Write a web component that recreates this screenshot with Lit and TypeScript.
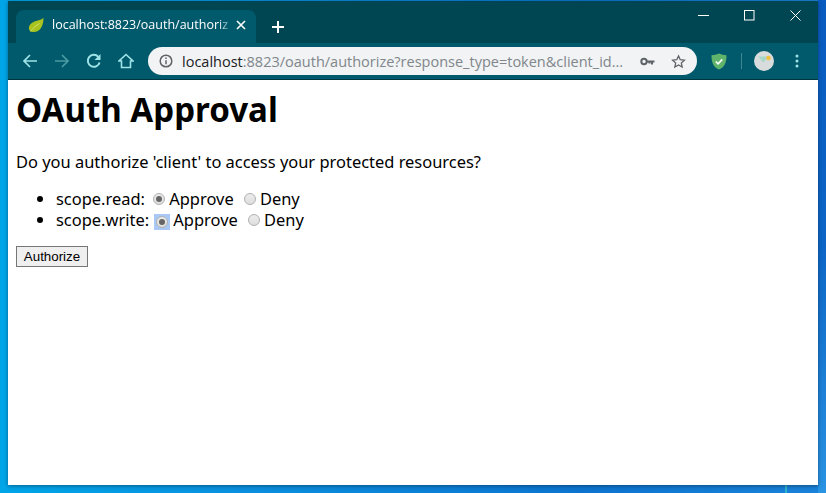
import { LitElement, html, css } from "lit";
import { customElement } from "lit/decorators.js";

@customElement("app-root")
export class AppRoot extends LitElement {
  static styles = css`
    :host {
      display: block;
      width: 826px;
      height: 493px;
      overflow: hidden;
      background:
        linear-gradient(#2fb4cf, #2fb4cf) 785px 100% / 2px 8px no-repeat,
        linear-gradient(180deg, #0a5bbf 0%, #0d66c6 50%, #2a93e2 100%) right / 8px 100% no-repeat,
        linear-gradient(90deg, #00a5e8 0%, #0a8fde 30%, #0c74cf 70%, #1a82d8 100%);
    }
    .window {
      margin: 1px 8px 0;
      height: 484px;
      display: flex;
      flex-direction: column;
      background: #fff;
      box-shadow: 0 1px 4px rgba(0, 0, 0, 0.4);
    }
    .titlebar {
      height: 42px;
      flex: none;
      background: #004652;
      display: flex;
      align-items: flex-end;
      box-sizing: border-box;
      padding-left: 8px;
    }
    .tab {
      width: 240px;
      height: 33px;
      box-sizing: border-box;
      background: #005a6b;
      border-radius: 8px 8px 0 0;
      display: flex;
      align-items: center;
      padding: 0 10px 4px 12px;
      color: #fff;
      font: 12.5px "Open Sans", sans-serif;
    }
    .tab-title {
      flex: 1;
      margin-left: 8px;
      white-space: nowrap;
      -webkit-mask-image: linear-gradient(90deg, #000 90%, transparent 100%);
      mask-image: linear-gradient(90deg, #000 90%, transparent 100%);
    }
    .newtab {
      margin: 0 0 8px 14px;
      width: 16px;
      height: 16px;
      display: block;
    }
    .spacer { flex: 1; }
    .winbtns {
      align-self: flex-start;
      display: flex;
      height: 30px;
    }
    .winbtn {
      width: 46px;
      height: 28px;
      display: flex;
      align-items: center;
      justify-content: center;
    }
    .toolbar {
      height: 36px;
      flex: none;
      background: #005a6b;
      border-bottom: 1px solid #00363f;
      display: flex;
      align-items: center;
      padding-left: 6px;
    }
    .nav {
      width: 32px;
      display: flex;
      justify-content: center;
      flex: none;
    }
    .omnibox {
      width: 549px;
      height: 28px;
      margin-left: 6px;
      background: #f1f3f4;
      border-radius: 14px;
      display: flex;
      align-items: center;
      box-sizing: border-box;
      padding: 0 11px 0 11px;
      font: 14.5px "Open Sans", sans-serif;
      color: #80868b;
      flex: none;
    }
    .url {
      flex: 1;
      margin-left: 9px;
      white-space: nowrap;
    }
    .host { color: #202124; }
    .omni-icon { margin-left: 16px; display: block; flex: none; }
    .ext { display: flex; align-items: center; margin-left: 14px; }
    .divider { width: 1px; height: 16px; background: #3f8693; margin: 0 12px 0 14px; }
    .avatar {
      width: 20px;
      height: 20px;
      display: block;
    }
    .menu { margin-left: 21px; display: block; }
    .page {
      flex: 1;
      color: #000;
      padding: 8px;
      font: 16.45px/21px "Noto Sans", "Open Sans", sans-serif;
    }
    h1 {
      margin: 0;
      font: 700 33.1px/44px "Noto Sans", "Open Sans", sans-serif;
    }
    p { margin: 19px 0 16px; }
    ul { margin: 0 0 16px; padding-left: 40px; }
    .radio {
      display: inline-block;
      width: 12px;
      height: 12px;
      box-sizing: border-box;
      border-radius: 50%;
      border: 1px solid #b0b0b0;
      background: linear-gradient(#ececec, #dedede);
      position: relative;
    }
    .radio.on::after {
      content: "";
      position: absolute;
      left: 2px;
      top: 2px;
      width: 6px;
      height: 6px;
      border-radius: 50%;
      background: #666;
    }
    .slot { margin: 0 4px 0 4px; }
    .ring {
      display: inline-block;
      padding: 2px;
      margin: 0 3px 0 1px;
      line-height: 0;
      background: #a9c8f5;
      vertical-align: -2px;
    }
    .gap { margin-left: 6px; }
    button {
      display: block;
      font: 13.33px "Liberation Sans", Arial, sans-serif;
      height: 21px;
      width: 72px;
      padding: 0;
      margin: 0;
      color: #000;
      background: #efefef;
      border: 1px solid #767676;
      box-sizing: border-box;
    }
  `;

  render() {
    return html`
      <div class="window">
        <div class="titlebar">
          <div class="tab">
            <svg width="16" height="16" viewBox="0 0 16 16">
              <path d="M15.500 .500C14 3.300 10 3 6.500 4.500 2.500 6 .5 9 1 12c.3 2 2 3 4 3 5 .5 10.500-3 10.500-14.500z" fill="#a9c41f"/>
              <path d="M2.500 14.500C5 11 8 8.500 11.500 6.500" stroke="#d4e06a" stroke-width="1" fill="none"/>
            </svg>
            <span class="tab-title">localhost:8823/oauth/authoriz</span>
            <svg width="10" height="10" viewBox="0 0 10 10">
              <path d="M1 1l8 8M9 1l-8 8" stroke="#fff" stroke-width="1.600" fill="none"/>
            </svg>
          </div>
          <svg class="newtab" viewBox="0 0 16 16">
            <path d="M8 2v12M2 8h12" stroke="#fff" stroke-width="2" fill="none"/>
          </svg>
          <div class="spacer"></div>
          <div class="winbtns">
            <div class="winbtn"><svg width="11" height="11" viewBox="0 0 11 11"><path d="M0 5.500h11" stroke="#fff" fill="none"/></svg></div>
            <div class="winbtn"><svg width="11" height="11" viewBox="0 0 11 11"><rect x=".5" y=".5" width="9.500" height="9.500" stroke="#fff" fill="none"/></svg></div>
            <div class="winbtn"><svg width="11" height="11" viewBox="0 0 11 11"><path d="M.5.500l10 10M10.500.500l-10 10" stroke="#fff" fill="none"/></svg></div>
          </div>
        </div>
        <div class="toolbar">
          <div class="nav"><svg width="16" height="16" viewBox="0 0 16 16"><path d="M15 8H2M8 2L2 8l6 6" stroke="#9ee3e8" stroke-width="1.700" fill="none"/></svg></div>
          <div class="nav"><svg width="16" height="16" viewBox="0 0 16 16"><path d="M1 8h13M8 2l6 6-6 6" stroke="#4a9ba3" stroke-width="1.700" fill="none"/></svg></div>
          <div class="nav"><svg width="16" height="16" viewBox="0 0 16 16"><path d="M13.600 9.500A6 6 0 1 1 12.300 3.800" stroke="#9ee3e8" stroke-width="2" fill="none"/><path d="M14.500 1v6h-6z" fill="#9ee3e8"/></svg></div>
          <div class="nav"><svg width="16" height="16" viewBox="0 0 16 16"><path d="M8 1.500L1 8h2.500v6.500h9V8H15z" stroke="#9ee3e8" stroke-width="1.600" fill="none"/></svg></div>
          <div class="omnibox">
            <svg width="14" height="14" viewBox="0 0 14 14"><circle cx="7" cy="7" r="5.800" stroke="#5f6368" stroke-width="1.500" fill="none"/><path d="M7 6.200v4M7 3.500v1.500" stroke="#5f6368" stroke-width="1.500"/></svg>
            <span class="url"><span class="host">localhost</span>:8823/oauth/authorize?response_type=token&amp;client_id...</span>
            <svg class="omni-icon" width="15" height="15" viewBox="0 0 15 15"><circle cx="4" cy="7.500" r="2.700" stroke="#5f6368" stroke-width="2" fill="none"/><path d="M6.500 7.500h8M12 7.500v3M9.500 7.500v2" stroke="#5f6368" stroke-width="2" fill="none"/></svg>
            <svg class="omni-icon" width="15" height="15" viewBox="0 0 24 24"><path d="M12 3l2.800 6.100 6.700.8-5 4.500 1.400 6.600L12 17.600 6.100 21l1.400-6.600-5-4.500 6.700-.8z" stroke="#5f6368" stroke-width="2" fill="none"/></svg>
          </div>
          <div class="ext">
            <svg width="16" height="17" viewBox="0 0 16 17"><path d="M8 .500C5.500 1.500 3 2 .500 2.200.500 9 2 14 8 16.500 14 14 15.500 9 15.500 2.200 13 2 10.500 1.500 8 .500z" fill="#5fb36a"/><path d="M4.800 8.500l2.300 2.300 4.200-4.400" stroke="#fff" stroke-width="1.600" fill="none"/></svg>
            <div class="divider"></div>
            <svg class="avatar" viewBox="0 0 20 20"><circle cx="10" cy="10" r="10" fill="#d9dcdc"/><path d="M4 5.500h10l-4.500 6v4.500h3H6.500h3v-4.500z" fill="#a5d8c8"/><circle cx="14.500" cy="7" r="2.300" fill="#f0c040"/></svg>
            <svg class="menu" width="4" height="14" viewBox="0 0 4 14"><circle cx="2" cy="2" r="1.500" fill="#9ee3e8"/><circle cx="2" cy="7" r="1.500" fill="#9ee3e8"/><circle cx="2" cy="12" r="1.500" fill="#9ee3e8"/></svg>
          </div>
        </div>
        <div class="page">
          <h1>OAuth Approval</h1>
          <p>Do you authorize 'client' to access your protected resources?</p>
          <ul>
            <li>scope.read: <span class="radio on slot"></span>Approve <span class="radio slot gap"></span>Deny</li>
            <li>scope.write: <span class="ring"><span class="radio on"></span></span>Approve <span class="radio slot gap"></span>Deny</li>
          </ul>
          <button>Authorize</button>
        </div>
      </div>
    `;
  }
}
